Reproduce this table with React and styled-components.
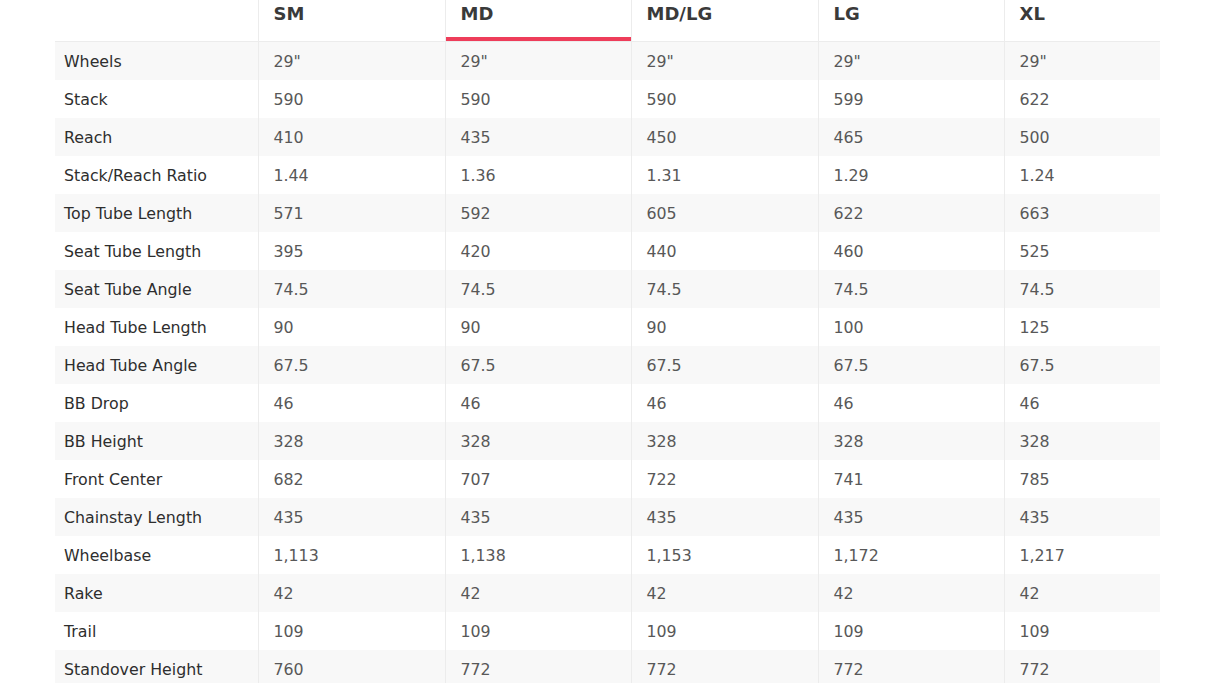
import styled, { createGlobalStyle } from "styled-components";

const GlobalStyle = createGlobalStyle`
  body {
    margin: 0;
    background: #fff;
    font-family: "DejaVu Sans", "Noto Sans", sans-serif;
  }
`;

const Page = styled.div`
  padding: 0 54px 0 55px;
  height: 683px;
  overflow: hidden;
`;

const Table = styled.table`
  width: 1105px;
  border-collapse: collapse;
  table-layout: fixed;
`;

const HeadCell = styled.th`
  height: 38px;
  padding: 3px 15px 0;
  text-align: left;
  vertical-align: top;
  font-size: 18px;
  line-height: 22px;
  font-weight: 700;
  color: #3a3a3a;
  border-left: ${(p) => (p.$first ? "none" : "1px solid #ececec")};
  border-bottom: 1px solid #ececec;
  box-shadow: ${(p) => (p.$active ? "inset 0 -4px 0 #ee3d5a" : "none")};
`;

const Row = styled.tr`
  background: ${(p) => (p.$shaded ? "#f8f8f8" : "#fff")};
`;

const LabelCell = styled.td`
  height: 38px;
  padding: 0 9px;
  font-size: 15.8px;
  color: #2e2e2e;
  white-space: nowrap;
`;

const ValueCell = styled.td`
  height: 38px;
  padding: 0 15px;
  font-size: 15.8px;
  color: #585858;
  border-left: 1px solid #ececec;
  white-space: nowrap;
`;

const sizes = ["SM", "MD", "MD/LG", "LG", "XL"];
const widths = [203, 187, 186, 187, 186, 156];

const rows = [
  ["Wheels", '29"', '29"', '29"', '29"', '29"'],
  ["Stack", "590", "590", "590", "599", "622"],
  ["Reach", "410", "435", "450", "465", "500"],
  ["Stack/Reach Ratio", "1.44", "1.36", "1.31", "1.29", "1.24"],
  ["Top Tube Length", "571", "592", "605", "622", "663"],
  ["Seat Tube Length", "395", "420", "440", "460", "525"],
  ["Seat Tube Angle", "74.5", "74.5", "74.5", "74.5", "74.5"],
  ["Head Tube Length", "90", "90", "90", "100", "125"],
  ["Head Tube Angle", "67.5", "67.5", "67.5", "67.5", "67.5"],
  ["BB Drop", "46", "46", "46", "46", "46"],
  ["BB Height", "328", "328", "328", "328", "328"],
  ["Front Center", "682", "707", "722", "741", "785"],
  ["Chainstay Length", "435", "435", "435", "435", "435"],
  ["Wheelbase", "1,113", "1,138", "1,153", "1,172", "1,217"],
  ["Rake", "42", "42", "42", "42", "42"],
  ["Trail", "109", "109", "109", "109", "109"],
  ["Standover Height", "760", "772", "772", "772", "772"],
];

export default function App() {
  return (
    <Page>
      <GlobalStyle />
      <Table>
        <colgroup>
          {widths.map((w, i) => (
            <col key={i} style={{ width: w }} />
          ))}
        </colgroup>
        <thead>
          <tr>
            <HeadCell $first />
            {sizes.map((s) => (
              <HeadCell key={s} $active={s === "MD"}>
                {s}
              </HeadCell>
            ))}
          </tr>
        </thead>
        <tbody>
          {rows.map(([label, ...vals], i) => (
            <Row key={label} $shaded={i % 2 === 0}>
              <LabelCell>{label}</LabelCell>
              {vals.map((v, j) => (
                <ValueCell key={j}>{v}</ValueCell>
              ))}
            </Row>
          ))}
        </tbody>
      </Table>
    </Page>
  );
}
